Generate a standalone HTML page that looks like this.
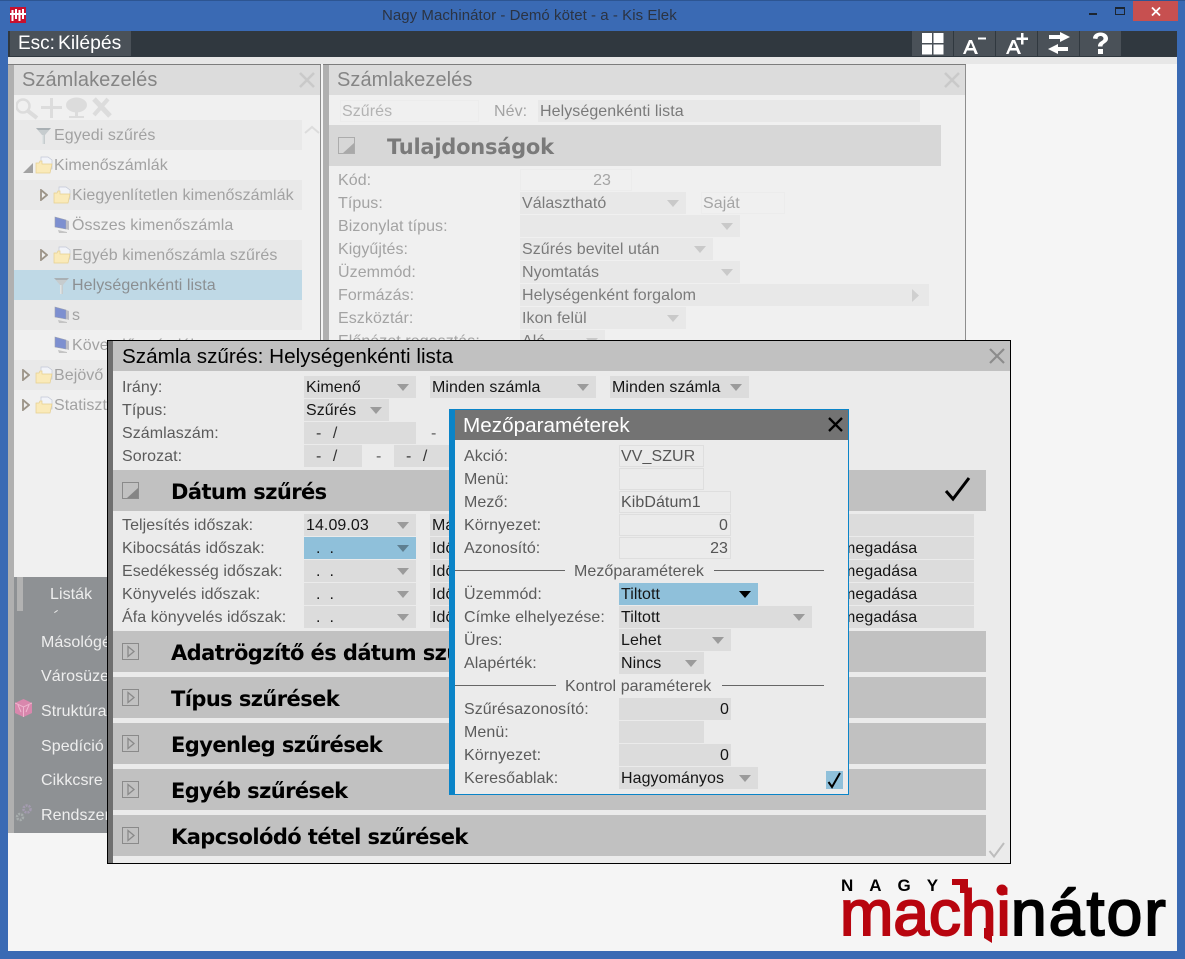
<!DOCTYPE html>
<html lang="hu"><head><meta charset="utf-8"><title>Nagy Machinátor</title>
<style>
html,body{margin:0;padding:0;width:1185px;height:959px;overflow:hidden;background:#3a6ab4}
body{position:relative;font:16px/22px "Liberation Sans",sans-serif;color:#555;letter-spacing:.07px}
div,span,svg{position:absolute;white-space:nowrap}
.b{background:#e9e9e9}
.l{height:22px;line-height:26px;color:#5b5b5b}
.f{height:22px;line-height:24px;background:#dcdcdc;color:#151515;padding-left:2px;box-sizing:border-box}
.o{height:22px;border:1px solid #dedede;color:#555;box-sizing:border-box;padding:0 1px;line-height:22px}
.r{text-align:right;padding-right:2px}
.f i{position:absolute;right:7px;top:8px;width:0;height:0;border-left:6px solid transparent;border-right:6px solid transparent;border-top:7px solid #9b9b9b}
.g .l{color:#a3a3a3}
.g .f{background:#e8e8e8;color:#7a7a7a}
.g .f i{border-top-color:#c9c9c9}
.g .o{border-color:#ececec;color:#a5a5a5}
.tr{height:30px;line-height:31px;color:#a2a2a2}
.h{height:41px;background:#c1c1c1;left:113px;width:873px}
.h b{position:absolute;left:58px;top:0;font:bold 21px/45px "DejaVu Sans",sans-serif;letter-spacing:-.58px;color:#000}
.h svg{left:9px;top:12px}
.nav{color:#eee;font-size:16px;line-height:26px;height:22px}
.d{letter-spacing:.9px}
</style></head><body>
<svg width="0" height="0" style="position:absolute"><defs>
<symbol id="folder" viewBox="0 0 18 18"><path d="M6 1h7l4 3v9H6z" fill="#f1f3f8" stroke="#c2c8d6" stroke-width=".7"/><path d="M1 17V7h3l1-2h2v3h10l-2 9z" fill="#faeab9" stroke="#e6cf8f" stroke-width=".7"/></symbol>
<symbol id="mon" viewBox="0 0 16 18"><path d="M1 1l11 3v9L1 11z" fill="#7d8fd0" stroke="#9aa0b0" stroke-width=".6"/><path d="M12 4l3 1v9l-3-1z" fill="#bcbcc4"/><path d="M4 14l9 2v1H5z" fill="#c4c4c4"/></symbol>
<symbol id="fun" viewBox="0 0 16 18"><path d="M0 1h15L9 8v9H6V8z" fill="#c6ccce"/><path d="M0 1h15l-2 2H2z" fill="#a9b0b4"/><path d="M6 8h1.500v9H6z" fill="#dfe3e4"/></symbol>
<symbol id="hollow" viewBox="0 0 8 12"><path d="M1 1l6 5-6 5z" fill="#f0f0f0" stroke="#9c9488" stroke-width="1.800"/></symbol>
<symbol id="open" viewBox="0 0 18 18"><rect x=".5" y=".5" width="16" height="16" fill="none" stroke="#8a8a8a"/><path d="M16 6v10H5z" fill="#858585"/></symbol>
<symbol id="closed" viewBox="0 0 18 18"><rect x=".5" y=".5" width="16" height="16" fill="none" stroke="#8a8a8a"/><path d="M6 3.500l6 5-6 5z" fill="none" stroke="#8a8a8a" stroke-width="1.300"/></symbol>
</defs></svg>

<!-- window chrome -->
<div style="left:0;top:0;width:1185px;height:1px;background:#2d5592"></div>
<svg style="left:10px;top:7px" width="16" height="16" viewBox="0 0 16 16"><rect width="16" height="16" fill="#c8102e"/><path d="M2.500 3v11M6 2v10M9.500 3v11M13 2v10" stroke="#fff" stroke-width="2"/><path d="M0 7h16" stroke="#fff" stroke-width="2"/></svg>
<div style="left:382px;top:5px;color:#2b3342;font-size:15px;line-height:21px;letter-spacing:.05px">Nagy Machinátor - Demó kötet - a - Kis Elek</div>
<div style="left:1089px;top:13px;width:8px;height:2px;background:#1c2530"></div>
<div style="left:1115px;top:7px;box-sizing:border-box;width:10px;height:8px;border:1px solid #1c2530;border-top-width:2px"></div>
<div style="left:1133px;top:1px;width:45px;height:20px;background:#c75050"></div>
<svg style="left:1151px;top:7px" width="10" height="9" viewBox="0 0 10 9"><path d="M1 .5l8 8M9 .5l-8 8" stroke="#fff" stroke-width="1.800"/></svg>

<div style="left:8px;top:31px;width:1169px;height:26px;background:#30383f"></div>
<div style="left:8px;top:57px;width:1169px;height:894px;background:#f5f5f5"></div>
<div style="left:8px;top:57px;width:1169px;height:7px;background:#e7e7e7"></div>
<div style="left:10px;top:31px;width:121px;height:25px;background:#4a5158"></div>
<div style="left:18px;top:31px;color:#fff;font-size:19px;line-height:25px;letter-spacing:0">Esc:</div>
<div style="left:58px;top:31px;color:#fff;font-size:19.300px;line-height:25px;letter-spacing:0">Kilépés</div>
<div style="left:912px;top:31px;width:41px;height:25px;background:#4a5158"></div>
<div style="left:954px;top:31px;width:41px;height:25px;background:#4a5158"></div>
<div style="left:996px;top:31px;width:41px;height:25px;background:#4a5158"></div>
<div style="left:1038px;top:31px;width:41px;height:25px;background:#4a5158"></div>
<div style="left:1080px;top:31px;width:41px;height:25px;background:#4a5158"></div>
<svg style="left:912px;top:31px" width="210" height="25" viewBox="0 0 210 25" fill="#fff">
<path d="M10 2h10v10H10zM21.500 2h10v10h-10zM10 13.500h10v10H10zM21.500 13.500h10v10h-10z"/>
<path d="M51 23l6-14h3l6 14h-3l-1.500-3.500h-6.500L53.500 23zm5.500-6h4.500l-2.200-5.500zM66 6.500h8v2h-8z"/>
<path d="M94 23l6-14h3l6 14h-3l-1.500-3.500h-6.500L96.500 23zm5.500-6h4.500l-2.200-5.500zM109 2h2.500v4.500h4.500v2.500h-4.500v4.500H109V9h-4.500V6.500h4.500z"/>
<path d="M137 4h11V1l10 5-10 5V8H137zM156 16h-10v-3l-10 5 10 5v-3h10z"/>
<path d="M181 7.500c0-3.500 3-6 7.500-6s7.500 2.500 7.500 6c0 4.500-5.500 4.500-5.500 8h-4.500c0-5.500 5.500-5 5.500-8 0-1.500-1.500-2.500-3-2.500s-3 1-3 3zM186 18h5v5h-5z"/>
</svg>

<!-- left panel -->
<div class="g" style="left:8px;top:64px;width:313px;height:513px;background:#f0f0f0;border-top:1px solid #7d7d7d;box-sizing:border-box"></div>
<div style="left:8px;top:65px;width:6px;height:512px;background:#b0b0b0"></div>
<div style="left:320px;top:65px;width:1px;height:512px;background:#8e8e8e"></div>
<div style="left:14px;top:65px;width:306px;height:30px;background:#dcdcdc"></div>
<div style="left:22px;top:65px;font-size:20px;line-height:31px;color:#858585">Számlakezelés</div>
<svg style="left:298px;top:71px" width="18" height="18"><path d="M2 2l14 14M16 2L2 16" stroke="#c9c9c9" stroke-width="2.500"/></svg>
<svg style="left:16px;top:96px" width="100" height="24" viewBox="0 0 100 24" fill="#dcdcdc"><circle cx="7" cy="10" r="6.500" fill="none" stroke="#dcdcdc" stroke-width="2.500"/><path d="M12 15l9 7" stroke="#dcdcdc" stroke-width="4"/><path d="M25 10h21v3H25zM34 2h3v20h-3z"/><ellipse cx="60.500" cy="9" rx="10.500" ry="7.500"/><path d="M59 14h3v7h-3zM53 20h15v2H53z"/><path d="M78 3l16 17" stroke="#dcdcdc" stroke-width="5"/><path d="M92 3L78 19" stroke="#dcdcdc" stroke-width="4"/></svg>
<div class="b" style="left:14px;top:120px;width:288px;height:30px"></div>
<div class="b" style="left:14px;top:180px;width:288px;height:30px"></div>
<div class="b" style="left:14px;top:240px;width:288px;height:30px"></div>
<div style="left:14px;top:270px;width:288px;height:30px;background:#bfd9e6"></div>
<div class="b" style="left:14px;top:300px;width:288px;height:30px"></div>
<div class="b" style="left:14px;top:360px;width:288px;height:30px"></div>
<svg style="left:304px;top:125px" width="16" height="10"><path d="M1 8l7-6 7 6" fill="none" stroke="#dcdcdc" stroke-width="2"/></svg>
<svg style="left:36px;top:127px" width="16" height="18"><use href="#fun"/></svg>
<div class="tr" style="left:54px;top:120px">Egyedi szűrés</div>
<svg style="left:23px;top:163px" width="11" height="10"><path d="M10 0v10H0z" fill="#a2a2a2"/></svg>
<svg style="left:35px;top:156px" width="18" height="18"><use href="#folder"/></svg>
<div class="tr" style="left:54px;top:150px">Kimenőszámlák</div>
<svg style="left:40px;top:189px" width="8" height="12"><use href="#hollow"/></svg>
<svg style="left:53px;top:186px" width="18" height="18"><use href="#folder"/></svg>
<div class="tr" style="left:72px;top:180px">Kiegyenlítetlen kimenőszámlák</div>
<svg style="left:54px;top:216px" width="16" height="18"><use href="#mon"/></svg>
<div class="tr" style="left:72px;top:210px">Összes kimenőszámla</div>
<svg style="left:40px;top:249px" width="8" height="12"><use href="#hollow"/></svg>
<svg style="left:53px;top:246px" width="18" height="18"><use href="#folder"/></svg>
<div class="tr" style="left:72px;top:240px">Egyéb kimenőszámla szűrés</div>
<svg style="left:54px;top:277px" width="16" height="18"><use href="#fun"/></svg>
<div class="tr" style="left:72px;top:270px;color:#8b8f92">Helységenkénti lista</div>
<svg style="left:54px;top:306px" width="16" height="18"><use href="#mon"/></svg>
<div class="tr" style="left:72px;top:300px">s</div>
<svg style="left:54px;top:336px" width="16" height="18"><use href="#mon"/></svg>
<div class="tr" style="left:72px;top:330px">Követelő számlák</div>
<svg style="left:22px;top:369px" width="8" height="12"><use href="#hollow"/></svg>
<svg style="left:35px;top:366px" width="18" height="18"><use href="#folder"/></svg>
<div class="tr" style="left:54px;top:360px">Bejövő</div>
<svg style="left:22px;top:399px" width="8" height="12"><use href="#hollow"/></svg>
<svg style="left:35px;top:396px" width="18" height="18"><use href="#folder"/></svg>
<div class="tr" style="left:54px;top:390px">Statisztika</div>

<!-- left nav -->
<div style="left:8px;top:577px;width:313px;height:256px;background:#8e9194"></div>
<div style="left:8px;top:577px;width:6px;height:256px;background:#b0b0b0"></div>
<div style="left:17px;top:577px;width:6px;height:34px;background:#b2b2b2"></div>
<div class="nav" style="left:50px;top:582px">Listák</div>
<div style="left:54px;top:611px;width:4px;height:1px;background:#eee;transform:rotate(-35deg)"></div>
<div class="nav" style="left:41px;top:630px">Másológép</div>
<div class="nav" style="left:41px;top:664px">Városüzemeltetés</div>
<div class="nav" style="left:41px;top:699px">Struktúra</div>
<div class="nav" style="left:41px;top:734px">Spedíció</div>
<div class="nav" style="left:41px;top:768px">Cikkcsre</div>
<div class="nav" style="left:41px;top:803px">Rendszer</div>
<svg style="left:15px;top:699px" width="17" height="18" viewBox="0 0 17 18"><path d="M8.500 0L17 4v10l-8.500 4L0 14V4z" fill="#d987ad"/><path d="M0 4l8.500 4L17 4M8.500 8v10M3 6l3 7M14 6l-3 7" stroke="#eeb6cf" fill="none"/></svg>
<svg style="left:15px;top:804px" width="18" height="18" viewBox="0 0 18 18"><circle cx="12" cy="5" r="3.500" fill="none" stroke="#a49bb0" stroke-width="2.500" stroke-dasharray="2 1"/><circle cx="5" cy="13" r="3" fill="none" stroke="#a7adad" stroke-width="2.500" stroke-dasharray="2 1"/></svg>

<!-- right panel -->
<div class="g" style="left:323px;top:64px;width:643px;height:300px;background:#f0f0f0;border-top:1px solid #7d7d7d;box-sizing:border-box">
</div>
<div style="left:323px;top:65px;width:6px;height:290px;background:#b0b0b0"></div>
<div style="left:965px;top:65px;width:1px;height:290px;background:#8e8e8e"></div>
<div style="left:329px;top:65px;width:636px;height:30px;background:#dcdcdc"></div>
<div style="left:337px;top:65px;font-size:20px;line-height:31px;color:#858585">Számlakezelés</div>
<svg style="left:943px;top:71px" width="18" height="18"><path d="M2 2l14 14M16 2L2 16" stroke="#c9c9c9" stroke-width="2.500"/></svg>
<div class="g">
<div class="o" style="left:340px;top:100px;width:139px;color:#b3b3b3">Szűrés</div>
<div class="l" style="left:494px;top:99px">Név:</div>
<div class="f" style="left:538px;top:100px;width:382px">Helységenkénti lista</div>
<div style="left:329px;top:125px;width:612px;height:41px;background:#d7d7d7"></div>
<svg style="left:338px;top:137px" width="18" height="18" opacity=".55"><use href="#open"/></svg>
<div style="left:387px;top:125px;font:bold 21px/45px 'DejaVu Sans',sans-serif;letter-spacing:-.25px;color:#7a7a7a">Tulajdonságok</div>
<div class="l" style="left:338px;top:168px">Kód:</div>
<div class="o r" style="left:520px;top:169px;width:112px;padding-right:20px">23</div>
<div class="l" style="left:338px;top:191px">Típus:</div>
<div class="f" style="left:520px;top:192px;width:166px">Választható<i></i></div>
<div class="o" style="left:701px;top:192px;width:84px">Saját</div>
<div class="l" style="left:338px;top:214px">Bizonylat típus:</div>
<div class="f" style="left:520px;top:215px;width:220px"><i></i></div>
<div class="l" style="left:338px;top:237px">Kigyűjtés:</div>
<div class="f" style="left:520px;top:238px;width:193px">Szűrés bevitel után<i></i></div>
<div class="l" style="left:338px;top:260px">Üzemmód:</div>
<div class="f" style="left:520px;top:261px;width:220px">Nyomtatás<i></i></div>
<div class="l" style="left:338px;top:283px">Formázás:</div>
<div class="f" style="left:520px;top:284px;width:409px">Helységenként forgalom</div>
<svg style="left:911px;top:289px" width="9" height="13"><path d="M1 0l7 6.500L1 13z" fill="#cfcfcf"/></svg>
<div class="l" style="left:338px;top:306px">Eszköztár:</div>
<div class="f" style="left:520px;top:307px;width:166px">Ikon felül<i></i></div>
<div class="l" style="left:338px;top:329px">Előnézet regosztás:</div>
<div class="f" style="left:520px;top:330px;width:85px">Aló<i></i></div>
</div>

<!-- filter dialog -->
<div style="left:107px;top:340px;width:904px;height:524px;background:#ebebeb;border:1px solid #000;border-left:0;box-sizing:border-box"></div>
<div style="left:107px;top:340px;width:1px;height:524px;background:#000"></div>
<div style="left:108px;top:341px;width:5px;height:522px;background:#6f6f6f"></div>
<div style="left:113px;top:341px;width:897px;height:30px;background:#c1c1c1"></div>
<div style="left:122px;top:341px;font-size:20.700px;line-height:31px;color:#000;letter-spacing:0">Számla szűrés: Helységenkénti lista</div>
<svg style="left:988px;top:347px" width="18" height="18"><path d="M2 2l14 14M16 2L2 16" stroke="#8c8c8c" stroke-width="2.200"/></svg>
<div class="l" style="left:122px;top:375px">Irány:</div>
<div class="f" style="left:304px;top:376px;width:112px">Kimenő<i></i></div>
<div class="f" style="left:430px;top:376px;width:166px">Minden számla<i></i></div>
<div class="f" style="left:610px;top:376px;width:139px">Minden számla<i></i></div>
<div class="l" style="left:122px;top:398px">Típus:</div>
<div class="f" style="left:304px;top:399px;width:85px">Szűrés<i></i></div>
<div class="l" style="left:122px;top:421px">Számlaszám:</div>
<div class="f d" style="left:304px;top:422px;width:112px;padding-left:12px;color:#333">-&nbsp;&nbsp;/</div>
<div class="l" style="left:431px;top:421px">-</div>
<div class="l" style="left:122px;top:444px">Sorozat:</div>
<div class="f d" style="left:304px;top:445px;width:58px;padding-left:12px;color:#333">-&nbsp;&nbsp;/</div>
<div class="l" style="left:376px;top:444px">-</div>
<div class="f d" style="left:394px;top:445px;width:58px;padding-left:12px;color:#333">-&nbsp;&nbsp;/</div>

<div class="h" style="top:470px"><svg width="18" height="18"><use href="#open"/></svg><b>Dátum szűrés</b></div>
<svg style="left:944px;top:476px" width="27" height="27" viewBox="0 0 27 27"><path d="M2 15l7 8L25 2" fill="none" stroke="#000" stroke-width="3"/></svg>
<div class="l" style="left:122px;top:513px">Teljesítés időszak:</div>
<div class="f" style="left:304px;top:514px;width:112px">14.09.03<i></i></div>
<div class="f" style="left:430px;top:514px;width:544px">Május</div>
<div class="l" style="left:122px;top:536px">Kibocsátás időszak:</div>
<div class="f" style="left:304px;top:537px;width:112px;background:#8fc0da;padding-left:12px">.&nbsp;&nbsp;.<i style="border-top-color:#5f7f90"></i></div>
<div class="f" style="left:430px;top:537px;width:544px">Időszak<span style="left:412px;top:0;color:#151515">megadása</span></div>
<div class="l" style="left:122px;top:559px">Esedékesség időszak:</div>
<div class="f" style="left:304px;top:560px;width:112px;padding-left:12px">.&nbsp;&nbsp;.<i></i></div>
<div class="f" style="left:430px;top:560px;width:544px">Időszak<span style="left:412px;top:0">megadása</span></div>
<div class="l" style="left:122px;top:582px">Könyvelés időszak:</div>
<div class="f" style="left:304px;top:583px;width:112px;padding-left:12px">.&nbsp;&nbsp;.<i></i></div>
<div class="f" style="left:430px;top:583px;width:544px">Időszak<span style="left:412px;top:0">megadása</span></div>
<div class="l" style="left:122px;top:605px">Áfa könyvelés időszak:</div>
<div class="f" style="left:304px;top:606px;width:112px;padding-left:12px">.&nbsp;&nbsp;.<i></i></div>
<div class="f" style="left:430px;top:606px;width:544px">Időszak<span style="left:412px;top:0">megadása</span></div>

<div class="h" style="top:631px"><svg width="18" height="18"><use href="#closed"/></svg><b>Adatrögzítő és dátum szűrések</b></div>
<div class="h" style="top:677px"><svg width="18" height="18"><use href="#closed"/></svg><b>Típus szűrések</b></div>
<div class="h" style="top:723px"><svg width="18" height="18"><use href="#closed"/></svg><b>Egyenleg szűrések</b></div>
<div class="h" style="top:769px"><svg width="18" height="18"><use href="#closed"/></svg><b>Egyéb szűrések</b></div>
<div class="h" style="top:815px"><svg width="18" height="18"><use href="#closed"/></svg><b>Kapcsolódó tétel szűrések</b></div>
<svg style="left:988px;top:841px" width="18" height="18" viewBox="0 0 18 18"><path d="M1.500 10l4.500 5.500L16 2" fill="none" stroke="#bdbdbd" stroke-width="2"/></svg>

<!-- params dialog -->
<div style="left:449px;top:409px;width:400px;height:386px;background:#ebebeb;border:1px solid #0a84c8;box-sizing:border-box"></div>
<div style="left:449px;top:409px;width:6px;height:386px;background:#0a84c8"></div>
<div style="left:455px;top:410px;width:393px;height:30px;background:#737373"></div>
<div style="left:463px;top:410px;color:#fff;font-size:20.700px;line-height:31px;letter-spacing:0">Mezőparaméterek</div>
<svg style="left:827px;top:416px" width="17" height="17"><path d="M2 2l13 13M15 2L2 15" stroke="#000" stroke-width="2.300"/></svg>
<div class="l" style="left:464px;top:444px">Akció:</div>
<div class="o" style="left:619px;top:445px;width:85px">VV_SZUR</div>
<div class="l" style="left:464px;top:467px">Menü:</div>
<div class="o" style="left:619px;top:468px;width:85px"></div>
<div class="l" style="left:464px;top:490px">Mező:</div>
<div class="o" style="left:619px;top:491px;width:112px">KibDátum1</div>
<div class="l" style="left:464px;top:513px">Környezet:</div>
<div class="o r" style="left:619px;top:514px;width:112px">0</div>
<div class="l" style="left:464px;top:536px">Azonosító:</div>
<div class="o r" style="left:619px;top:537px;width:112px">23</div>
<div style="left:455px;top:570px;width:110px;height:1px;background:#666"></div>
<div style="left:714px;top:570px;width:110px;height:1px;background:#666"></div>
<div class="l" style="left:574px;top:559px">Mezőparaméterek</div>
<div class="l" style="left:464px;top:582px">Üzemmód:</div>
<div class="f" style="left:619px;top:583px;width:139px;background:#8fc0da">Tiltott<i style="border-top-color:#000"></i></div>
<div class="l" style="left:464px;top:605px">Címke elhelyezése:</div>
<div class="f" style="left:619px;top:606px;width:193px">Tiltott<i></i></div>
<div class="l" style="left:464px;top:628px">Üres:</div>
<div class="f" style="left:619px;top:629px;width:112px">Lehet<i></i></div>
<div class="l" style="left:464px;top:651px">Alapérték:</div>
<div class="f" style="left:619px;top:652px;width:85px">Nincs<i></i></div>
<div style="left:455px;top:685px;width:101px;height:1px;background:#666"></div>
<div style="left:722px;top:685px;width:102px;height:1px;background:#666"></div>
<div class="l" style="left:565px;top:674px">Kontrol paraméterek</div>
<div class="l" style="left:464px;top:697px">Szűrésazonosító:</div>
<div class="f r" style="left:619px;top:698px;width:112px">0</div>
<div class="l" style="left:464px;top:720px">Menü:</div>
<div class="f" style="left:619px;top:721px;width:85px"></div>
<div class="l" style="left:464px;top:743px">Környezet:</div>
<div class="f r" style="left:619px;top:744px;width:112px">0</div>
<div class="l" style="left:464px;top:766px">Keresőablak:</div>
<div class="f" style="left:619px;top:767px;width:139px">Hagyományos<i></i></div>
<div style="left:826px;top:771px;width:17px;height:18px;background:#8fc0da"></div>
<svg style="left:826px;top:771px" width="17" height="18" viewBox="0 0 17 18"><path d="M2.500 11l3.500 5L14 2" fill="none" stroke="#000" stroke-width="2"/></svg>

<!-- logo -->
<div style="left:841px;top:877px;font:bold 17px/18px 'Liberation Sans',sans-serif;letter-spacing:16px;color:#000">NAGY</div>
<div style="left:840px;top:877px;font:400 64px/72px 'Liberation Sans',sans-serif;letter-spacing:0;color:#b8050f;-webkit-text-stroke:2px #b8050f">machi</div>
<div style="left:1011px;top:877px;font:400 64px/72px 'Liberation Sans',sans-serif;letter-spacing:2.200px;color:#000;-webkit-text-stroke:2px #000">nátor</div>
<svg style="left:950px;top:878px" width="60" height="66" viewBox="0 0 60 66"><path d="M2 1h16v6H2zM10 1h8v14h-8zM34 50h8v15l-8-5z" fill="#b8050f"/><circle cx="52" cy="12" r="5.500" fill="#b8050f"/></svg>
</body></html>
